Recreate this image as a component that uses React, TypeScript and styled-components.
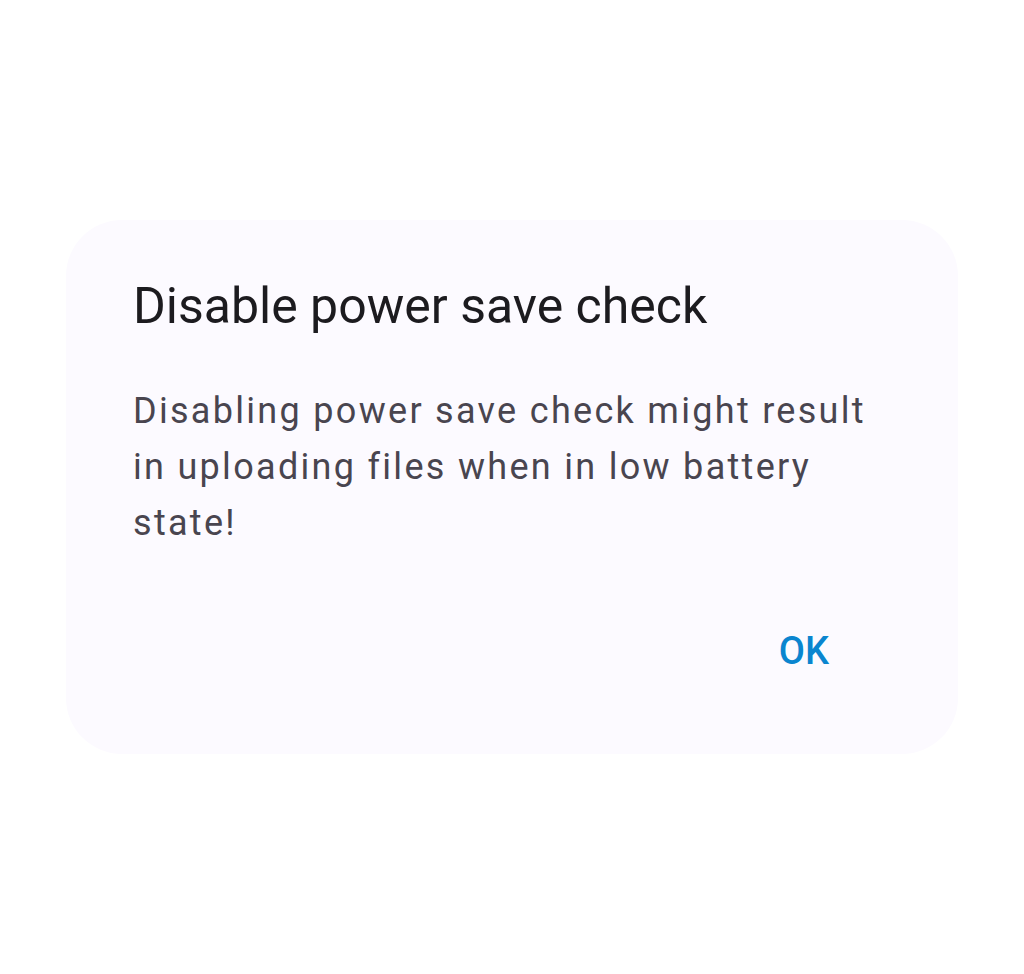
import styled, { createGlobalStyle } from "styled-components";

const Global = createGlobalStyle`
  html, body {
    margin: 0;
    padding: 0;
    background: #ffffff;
  }
  body {
    font-family: Roboto, "Noto Sans", sans-serif;
    -webkit-font-smoothing: antialiased;
  }
`;

const Screen = styled.div`
  width: 1024px;
  height: 974px;
  padding-top: 220px;
  box-sizing: border-box;
  display: flex;
  justify-content: center;
  align-items: flex-start;
`;

const Dialog = styled.div`
  width: 892px;
  height: 534px;
  margin-left: -108px;
  margin-right: -108px;
  box-sizing: border-box;
  padding: 56px 67px 0 67px;
  background: #fcfaff;
  border-radius: 56px;
  display: flex;
  flex-direction: column;
`;

const Title = styled.h2`
  margin: 0;
  font-size: 50px;
  line-height: 60px;
  font-weight: 400;
  color: #1c1b1f;
`;

const Message = styled.p`
  margin: 47px 0 0;
  font-size: 36px;
  line-height: 56px;
  letter-spacing: 2.3px;
  color: #49454f;
`;

const Actions = styled.div`
  margin-top: 76px;
  display: flex;
  justify-content: flex-end;
`;

const TextButton = styled.button`
  border: none;
  background: none;
  padding: 0 62px 0 0;
  font-family: inherit;
  font-size: 38px;
  line-height: 48px;
  font-weight: 500;
  color: #0a85cf;
  cursor: pointer;
`;

export default function App() {
  return (
    <Screen>
      <Global />
      <Dialog>
        <Title>Disable power save check</Title>
        <Message>
          Disabling power save check might result in uploading files when in low battery state!
        </Message>
        <Actions>
          <TextButton>OK</TextButton>
        </Actions>
      </Dialog>
    </Screen>
  );
}
